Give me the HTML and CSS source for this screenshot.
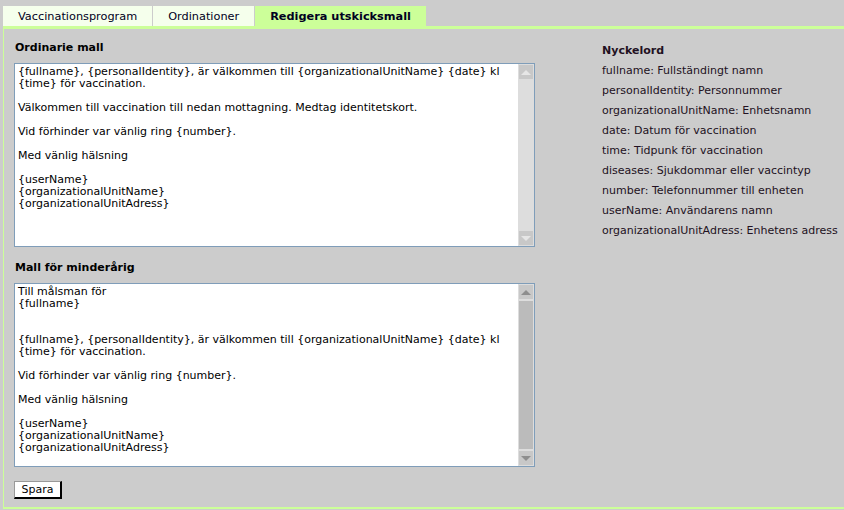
FILE: index.html
```html
<!DOCTYPE html>
<html lang="sv">

<head>
    <meta charset="UTF-8">
    <title>Redigera utskicksmall</title>
    <link rel="stylesheet" href="styles.css">
</head>

<body>
    <ul class="tabs">
        <li><a href="javascript:void(0)">Vaccinationsprogram</a></li>
        <li><a href="javascript:void(0)">Ordinationer</a></li>
        <li class="active"><a href="javascript:void(0)">Redigera utskicksmall</a></li>
    </ul>
    <div class="panel">
        <div class="left">
            <h3>Ordinarie mall</h3>
            <div class="editor">
                <textarea class="mall">{fullname}, {personalIdentity}, är välkommen till {organizationalUnitName} {date} kl {time} för vaccination.

Välkommen till vaccination till nedan mottagning. Medtag identitetskort.

Vid förhinder var vänlig ring {number}.

Med vänlig hälsning

{userName}
{organizationalUnitName}
{organizationalUnitAdress}</textarea>
                <!-- rullningslist, inaktiv -->
                <div class="bar disabled">
                    <div class="btn"><span class="up"></span></div>
                    <div class="track"></div>
                    <div class="btn"><span class="down"></span></div>
                </div>
            </div>
            <h3>Mall för minderårig</h3>
            <div class="editor">
                <textarea class="mall">Till målsman för
{fullname}


{fullname}, {personalIdentity}, är välkommen till {organizationalUnitName} {date} kl {time} för vaccination.

Vid förhinder var vänlig ring {number}.

Med vänlig hälsning

{userName}
{organizationalUnitName}
{organizationalUnitAdress}
</textarea>
                <div class="bar">
                    <div class="btn"><span class="up"></span></div>
                    <div class="track"><div class="thumb"></div></div>
                    <div class="btn"><span class="down"></span></div>
                </div>
            </div>
            <button class="spara">Spara</button>
        </div>
        <div class="right">
            <h3>Nyckelord</h3>
            <p>fullname: Fullständingt namn</p>
            <p>personalIdentity: Personnummer</p>
            <p>organizationalUnitName: Enhetsnamn</p>
            <p>date: Datum för vaccination</p>
            <p>time: Tidpunk för vaccination</p>
            <p>diseases: Sjukdommar eller vaccintyp</p>
            <p>number: Telefonnummer till enheten</p>
            <p>userName: Användarens namn</p>
            <p>organizationalUnitAdress: Enhetens adress</p>
        </div>
    </div>
</body>

</html>
```

FILE: styles.css
```css
* {
    padding: 0;
    margin: 0;
}

body {
    background-color: #cccccc;
    font-family: "DejaVu Sans", Verdana, sans-serif;
    font-size: 11px;
    color: #000;
    padding: 6px 0 0 3px;
}

.tabs {
    list-style: none;
    display: flex;
    height: 20px;
}

.tabs li {
    margin-right: 1px;
    background-color: #f5ffec;
}

.tabs a {
    display: block;
    padding: 1px 15px 0;
    line-height: 19px;
    font-size: 11.3px;
    color: #000022;
    text-decoration: none;
}

.tabs .active {
    background-color: #ccff99;
}

.tabs .active a {
    font-weight: bold;
}

.panel {
    display: flex;
    border-top: 3px solid #ccff99;
    border-left: 1px solid #ccff99;
    border-bottom: 2px solid #ccff99;
    padding: 11px 0 0 10px;
    height: 483px;
    box-sizing: border-box;
}

.left {
    width: 521px;
}

.left h3 {
    font-size: 11px;
    font-weight: bold;
    height: 23px;
    padding: 1px 0 0 1px;
    box-sizing: border-box;
}

.editor {
    display: flex;
    width: 521px;
    height: 184px;
    border: 1px solid #7f9db9;
    box-sizing: border-box;
    background-color: #fff;
    margin-bottom: 13px;
}

.mall {
    flex: 1;
    border: none;
    outline: none;
    padding: 2px 3px;
    font-family: "DejaVu Sans", Verdana, sans-serif;
    font-size: 11px;
    line-height: 12px;
    color: #000;
    resize: none;
    overflow: hidden;
}

/* egen rullningslist */
.bar {
    width: 17px;
    padding: 1px;
    box-sizing: border-box;
    background-color: #dddddd;
    border-left: 1px solid #fff;
    display: flex;
    flex-direction: column;
}

.bar .btn {
    height: 14px;
    background-color: #c8c8c8;
    display: flex;
    align-items: center;
    justify-content: center;
}

.bar .track {
    flex: 1;
    padding: 2px 0;
    display: flex;
}

.bar .thumb {
    flex: 1;
    background-color: #bbbbbb;
}

.up {
    border-left: 5px solid transparent;
    border-right: 5px solid transparent;
    border-bottom: 5px solid #8e8e8e;
}

.down {
    border-left: 5px solid transparent;
    border-right: 5px solid transparent;
    border-top: 5px solid #8e8e8e;
}

.disabled .up {
    border-bottom-color: #e6e6e6;
}

.disabled .down {
    border-top-color: #e6e6e6;
}

.spara {
    margin-top: 1px;
    width: 48px;
    height: 18px;
    background-color: #fff;
    border-top: 1px solid #999;
    border-left: 1px solid #999;
    border-right: 2px solid #000;
    border-bottom: 2px solid #000;
    font-family: "DejaVu Sans", Verdana, sans-serif;
    font-size: 11px;
    color: #000;
}

.right {
    margin-left: 67px;
    padding-top: 4px;
    color: #221122;
}

.right h3 {
    font-size: 11px;
    font-weight: bold;
    height: 20px;
}

.right p {
    height: 20px;
    white-space: nowrap;
}
```
